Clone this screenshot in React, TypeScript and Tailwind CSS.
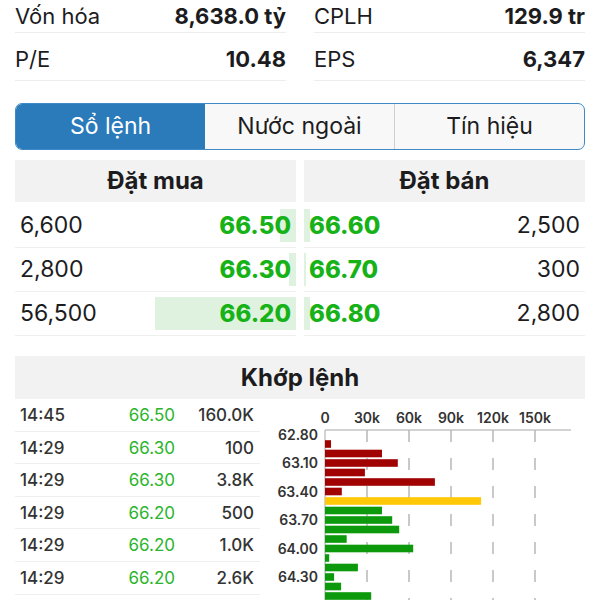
import React from 'react';

const STATS = [
  [
    { label: 'Vốn hóa', value: '8,638.0 tỷ' },
    { label: 'CPLH', value: '129.9 tr' },
  ],
  [
    { label: 'P/E', value: '10.48' },
    { label: 'EPS', value: '6,347' },
  ],
];

const TABS = ['Sổ lệnh', 'Nước ngoài', 'Tín hiệu'];

const BIDS = [
  { qty: '6,600', price: '66.50', bar: 16 },
  { qty: '2,800', price: '66.30', bar: 7 },
  { qty: '56,500', price: '66.20', bar: 141 },
];

const ASKS = [
  { qty: '2,500', price: '66.60', bar: 6 },
  { qty: '300', price: '66.70', bar: 2 },
  { qty: '2,800', price: '66.80', bar: 6 },
];

const TRADES = [
  { time: '14:45', price: '66.50', vol: '160.0K' },
  { time: '14:29', price: '66.30', vol: '100' },
  { time: '14:29', price: '66.30', vol: '3.8K' },
  { time: '14:29', price: '66.20', vol: '500' },
  { time: '14:29', price: '66.20', vol: '1.0K' },
  { time: '14:29', price: '66.20', vol: '2.6K' },
];

// volume by price level, in thousands
const LEVELS = [
  { p: '62.80', v: 0, c: 'red' },
  { p: '62.90', v: 4.3, c: 'red' },
  { p: '63.00', v: 40.7, c: 'red' },
  { p: '63.10', v: 52, c: 'red' },
  { p: '63.20', v: 28.5, c: 'red' },
  { p: '63.30', v: 78.5, c: 'red' },
  { p: '63.40', v: 12, c: 'red' },
  { p: '63.50', v: 111.5, c: 'ref' },
  { p: '63.60', v: 40.7, c: 'green' },
  { p: '63.70', v: 48, c: 'green' },
  { p: '63.80', v: 53, c: 'green' },
  { p: '63.90', v: 15.5, c: 'green' },
  { p: '64.00', v: 63, c: 'green' },
  { p: '64.10', v: 3, c: 'green' },
  { p: '64.20', v: 23.5, c: 'green' },
  { p: '64.30', v: 6.5, c: 'green' },
  { p: '64.40', v: 11.5, c: 'green' },
  { p: '64.50', v: 33, c: 'green' },
  { p: '64.60', v: 11.5, c: 'green' },
];

const BAR_COLORS: Record<string, string> = {
  red: '#a10303',
  ref: '#ffc907',
  green: '#0c9a0c',
};

function VolumeChart() {
  const x0 = 65;
  const k = 1.4; // px per 1k
  const ticks = [0, 30, 60, 90, 120, 150];
  return (
    <svg width="325" height="201" className="block">
      {ticks.map((t) => (
        <text
          key={t}
          x={x0 + t * k}
          y={24}
          textAnchor="middle"
          fontSize="14"
          fontWeight="600"
          fill="#333"
        >
          {t === 0 ? '0' : `${t}k`}
        </text>
      ))}
      <line x1={x0} y1={31} x2={311} y2={31} stroke="#c4c4c4" strokeWidth="1.5" />
      <line x1={x0} y1={31} x2={x0} y2={201} stroke="#c4c4c4" strokeWidth="1.5" />
      {ticks.slice(1).map((t) => (
        <line
          key={t}
          x1={x0 + t * k}
          y1={31}
          x2={x0 + t * k}
          y2={201}
          stroke="#b8b8b8"
          strokeWidth="1.5"
          strokeDasharray="12 16"
        />
      ))}
      {LEVELS.map((l, i) => {
        const cy = 35.5 + i * 9.5;
        return (
          <g key={l.p}>
            {l.v > 0 && (
              <rect x={x0} y={cy - 3.8} width={l.v * k} height={7.6} fill={BAR_COLORS[l.c]} />
            )}
            {i % 3 === 0 && (
              <text x={58} y={cy + 5} textAnchor="end" fontSize="14" fontWeight="600" fill="#333">
                {l.p}
              </text>
            )}
          </g>
        );
      })}
    </svg>
  );
}

export default function App() {
  return (
    <div className="w-[600px] h-[600px] overflow-hidden bg-white font-[Inter,sans-serif] text-[#1c1c1e]">
      {/* Stats */}
      <div className="flex flex-col px-[15px]">
        {STATS.map((row, ri) => (
          <div key={ri} className={`flex gap-[28px] ${ri === 0 ? 'h-[38px] pb-[5px]' : 'h-[43px] pt-[1px]'}`}>
            {row.map((s) => (
              <div key={s.label} className="flex-1 flex items-center justify-between border-b border-[#ededed]">
                <span className="text-[22px]">{s.label}</span>
                <span className="text-[22px] font-bold">{s.value}</span>
              </div>
            ))}
          </div>
        ))}
      </div>

      {/* Tabs */}
      <div className="mx-[15px] mt-[22px] h-[47px] flex rounded-[7px] border-[1.5px] border-[#3f8ac6] overflow-hidden bg-[#f8f8f8]">
        {TABS.map((t, i) => (
          <div
            key={t}
            className={`flex-1 flex items-center justify-center text-[23px] ${
              i === 0 ? 'bg-[#2b7bba] text-white' : i === 2 ? 'border-l border-[#cfcfcf]' : ''
            }`}
          >
            {t}
          </div>
        ))}
      </div>

      {/* Order book */}
      <div className="mx-[15px] mt-[10px] flex gap-[8px]">
        <div className="flex-1 flex flex-col">
          <div className="h-[42px] mb-[2px] bg-[#f2f2f2] flex items-center justify-center text-[24px] font-bold">Đặt mua</div>
          {BIDS.map((b) => (
            <div key={b.price} className="relative h-[44px] flex items-center justify-between pl-[5px] pr-[5px] border-b border-[#efefef]">
              <div className="absolute right-0 top-[5px] bottom-[5px] bg-[#dff2df]" style={{ width: b.bar }} />
              <span className="relative text-[23px]">{b.qty}</span>
              <span className="relative text-[24px] font-extrabold text-[#17b217]">{b.price}</span>
            </div>
          ))}
        </div>
        <div className="flex-1 flex flex-col">
          <div className="h-[42px] mb-[2px] bg-[#f2f2f2] flex items-center justify-center text-[24px] font-bold">Đặt bán</div>
          {ASKS.map((a) => (
            <div key={a.price} className="relative h-[44px] flex items-center justify-between pl-[5px] pr-[5px] border-b border-[#efefef]">
              <div className="absolute left-0 top-[5px] bottom-[5px] bg-[#dff2df]" style={{ width: a.bar }} />
              <span className="relative text-[24px] font-extrabold text-[#17b217]">{a.price}</span>
              <span className="relative text-[23px]">{a.qty}</span>
            </div>
          ))}
        </div>
      </div>

      {/* Matched orders */}
      <div className="mx-[15px] mt-[20px] h-[43px] bg-[#f2f2f2] flex items-center justify-center text-[24px] font-bold">
        Khớp lệnh
      </div>
      <div className="flex pl-[15px]">
        <div className="w-[245px] flex flex-col">
          {TRADES.map((t, i) => (
            <div key={i} className="h-[32.6px] pt-[2px] flex items-center border-b border-[#efefef] text-[17px]">
              <span className="w-[60px] pl-[5px] font-medium text-[#333]">{t.time}</span>
              <span className="w-[100px] text-right text-[#2bb52b]">{t.price}</span>
              <span className="flex-1 text-right pr-[6px] font-medium text-[#333]">{t.vol}</span>
            </div>
          ))}
        </div>
        <VolumeChart />
      </div>
    </div>
  );
}
